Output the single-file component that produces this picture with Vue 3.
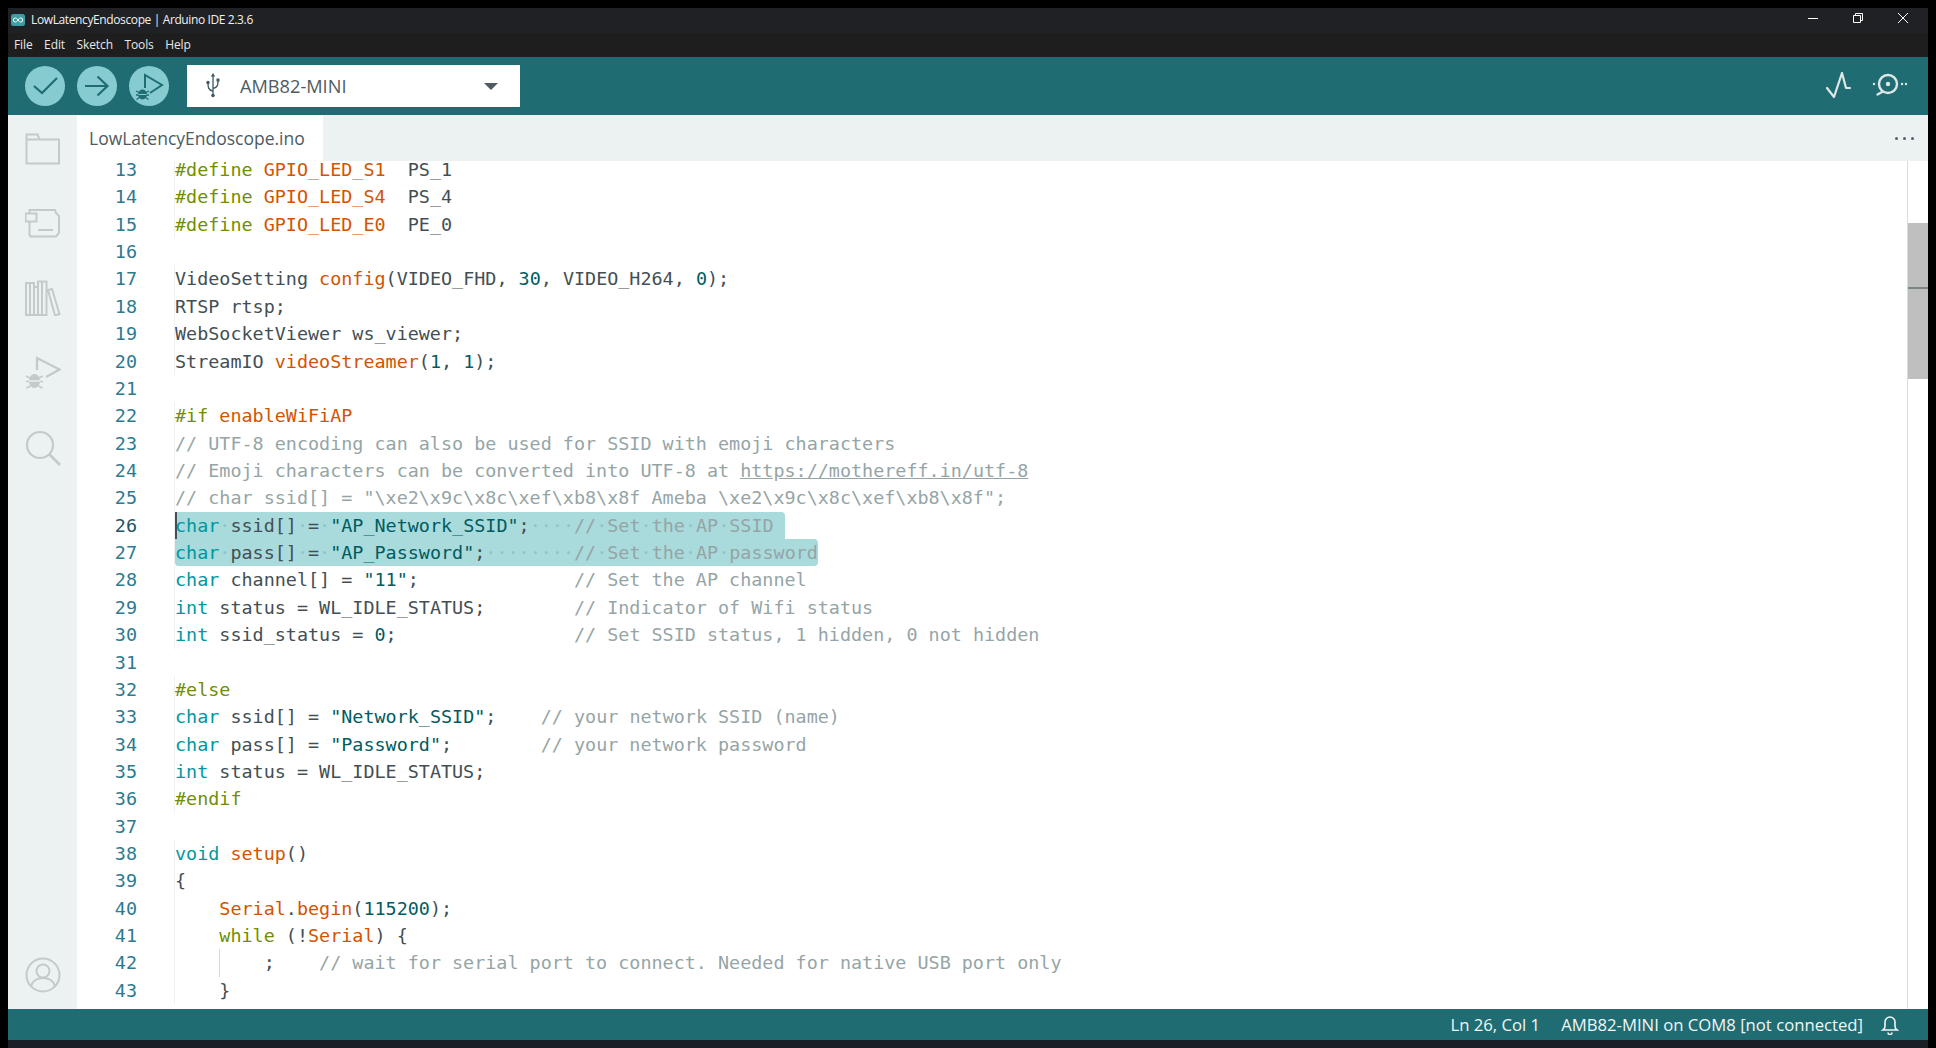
<script setup>
const source = [
  '{p:#define} {f:GPIO_LED_S1}  PS_1',
  '{p:#define} {f:GPIO_LED_S4}  PS_4',
  '{p:#define} {f:GPIO_LED_E0}  PE_0',
  '',
  'VideoSetting {f:config}(VIDEO_FHD, {n:30}, VIDEO_H264, {n:0});',
  'RTSP rtsp;',
  'WebSocketViewer ws_viewer;',
  'StreamIO {f:videoStreamer}({n:1}, {n:1});',
  '',
  '{p:#if} {f:enableWiFiAP}',
  '{c:// UTF-8 encoding can also be used for SSID with emoji characters}',
  '{c:// Emoji characters can be converted into UTF-8 at }{u:https://mothereff.in/utf-8}',
  '{c:// char ssid[] = "\\xe2\\x9c\\x8c\\xef\\xb8\\x8f Ameba \\xe2\\x9c\\x8c\\xef\\xb8\\x8f";}',
  '{k:char}{d:·}ssid[]{d:·}={d:·}{s:"AP_Network_SSID"};{d:····}{c://}{d:·}{c:Set}{d:·}{c:the}{d:·}{c:AP}{d:·}{c:SSID}',
  '{k:char}{d:·}pass[]{d:·}={d:·}{s:"AP_Password"};{d:········}{c://}{d:·}{c:Set}{d:·}{c:the}{d:·}{c:AP}{d:·}{c:password}',
  '{k:char} channel[] = {s:"11"};              {c:// Set the AP channel}',
  '{k:int} status = WL_IDLE_STATUS;        {c:// Indicator of Wifi status}',
  '{k:int} ssid_status = {n:0};                {c:// Set SSID status, 1 hidden, 0 not hidden}',
  '',
  '{p:#else}',
  '{k:char} ssid[] = {s:"Network_SSID"};    {c:// your network SSID (name)}',
  '{k:char} pass[] = {s:"Password"};        {c:// your network password}',
  '{k:int} status = WL_IDLE_STATUS;',
  '{p:#endif}',
  '',
  '{k:void} {f:setup}()',
  '{',
  '    {f:Serial}.{f:begin}({n:115200});',
  '    {p:while} (!{f:Serial}) {',
  '        ;    {c:// wait for serial port to connect. Needed for native USB port only}',
  '    }',
]

function parse(text) {
  const parts = []
  const re = /\{([a-z]):([^}]*)\}/g
  let last = 0
  let m
  while ((m = re.exec(text))) {
    if (m.index > last) parts.push({ cls: '', text: text.slice(last, m.index) })
    parts.push({ cls: 't-' + m[1], text: m[2] })
    last = m.index + m[0].length
  }
  if (last < text.length) parts.push({ cls: '', text: text.slice(last) })
  return parts
}

const lines = source.map((text, i) => ({
  no: 13 + i,
  parts: parse(text),
  selected: i === 13 || i === 14,
  guide: i === 29,
}))
const menus = ['File', 'Edit', 'Sketch', 'Tools', 'Help']
</script>

<template>
  <div class="window">
    <header class="titlebar">
      <svg class="logo" viewBox="0 0 14 12" width="14" height="12">
        <rect width="14" height="12" rx="2.5" fill="#3f9ea3" />
        <path d="M7 6C6 4.4 5.2 4 4.3 4a2 2 0 0 0 0 4C5.2 8 6 7.6 7 6c1-1.6 1.8-2 2.7-2a2 2 0 0 1 0 4C8.800 8 8 7.600 7 6z" fill="none" stroke="#fff" stroke-width="1" />
      </svg>
      <span class="title">LowLatencyEndoscope | Arduino IDE 2.3.6</span>
      <div class="winctl">
        <svg width="12" height="12" viewBox="0 0 12 12"><path d="M1 6.500h10" stroke="#fff" fill="none" /></svg>
        <svg width="12" height="12" viewBox="0 0 12 12"><path d="M1.500 3.500h7v7h-7zM3.500 3.500v-2h7v7h-2" stroke="#fff" fill="none" /></svg>
        <svg width="12" height="12" viewBox="0 0 12 12"><path d="M1 1l10 10M11 1L1 11" stroke="#fff" fill="none" /></svg>
      </div>
    </header>
    <nav class="menubar">
      <span v-for="m in menus" :key="m">{{ m }}</span>
    </nav>
    <section class="toolbar">
      <button class="round">
        <svg width="40" height="40" viewBox="0 0 40 40"><path d="M9 20l8 7 15-15" fill="none" stroke="#1f6d72" stroke-width="2.200" /></svg>
      </button>
      <button class="round second">
        <svg width="40" height="40" viewBox="0 0 40 40"><path d="M8 20h22M20.500 10.500l10 9.500-10 9.500" fill="none" stroke="#1f6d72" stroke-width="2.200" /></svg>
      </button>
      <button class="round third">
        <svg width="40" height="40" viewBox="0 0 40 40">
          <path d="M16 22V9l17 10-12 8" fill="none" stroke="#1f6d72" stroke-width="2" />
          <ellipse cx="13.500" cy="28.500" rx="4.500" ry="5" fill="#1f6d72" />
          <path d="M7 25l3 1.500M7 29h3M7.500 33.500l3-2M20 25l-3 1.500M20 29h-3M19.500 33.500l-3-2" stroke="#1f6d72" stroke-width="1.300" />
          <path d="M9.500 28.500h8" stroke="#86cbd0" stroke-width="1" />
        </svg>
      </button>
      <div class="board">
        <svg width="16" height="26" viewBox="0 0 16 26">
          <path d="M8 2v21M8 18C3 17 3 14 3 10M8 15.500c5-1 5-4 5-8" fill="none" stroke="#3f5866" stroke-width="1.300" />
          <circle cx="3" cy="9.500" r="1.700" fill="#3f5866" /><rect x="11.500" y="5.500" width="3" height="3" fill="#3f5866" /><circle cx="8" cy="22.500" r="1.800" fill="#3f5866" /><path d="M8 0l2.200 3.500H5.800z" fill="#3f5866" />
        </svg>
        <span class="board-name">AMB82-MINI</span>
        <span class="caret"></span>
      </div>
      <div class="tool-right">
        <svg width="28" height="28" viewBox="0 0 28 28"><path d="M3 16l7 9 8-24 4 15h4" fill="none" stroke="#dfe7e7" stroke-width="2.200" stroke-linejoin="round" stroke-linecap="round" /></svg>
        <svg width="38" height="28" viewBox="0 0 38 28">
          <circle cx="16" cy="12" r="9" fill="none" stroke="#dfe7e7" stroke-width="2.400" />
          <circle cx="16" cy="12" r="2.200" fill="#dfe7e7" />
          <path d="M10 20l-4.500 2.500" stroke="#dfe7e7" stroke-width="2.400" stroke-linecap="round" />
          <circle cx="2" cy="12" r="1.200" fill="#dfe7e7" /><circle cx="30" cy="12" r="1.200" fill="#dfe7e7" /><circle cx="34" cy="12" r="1.200" fill="#dfe7e7" />
        </svg>
      </div>
    </section>
    <div class="workspace">
      <aside class="sidebar">
        <svg class="side" viewBox="0 0 36 36"><path d="M1.500 4.500h11l2 5h19.500v24H1.500z M1.500 9.500h13" fill="none" stroke="#c4caca" stroke-width="2" /></svg>
        <svg class="side" viewBox="0 0 36 36"><path d="M4.500 8.500V5H30l1 3 3 3v17l-3 3.500H5.500l-1-2V17M0.500 8.500h11v8H0.500zM13 25h15" fill="none" stroke="#c4caca" stroke-width="2" /></svg>
        <svg class="side" viewBox="0 0 36 36"><path d="M1 3h8v32H1zM5 3v32M9 7h4v28H9zM13 1.500h8.500V35H13zM17 1.500V35M23 10l4-1 7.500 25-4.500 1.500z" fill="none" stroke="#c4caca" stroke-width="2" /></svg>
        <svg class="side" viewBox="0 0 36 36"><path d="M12 15V3l22.500 11.500L21 22" fill="none" stroke="#c4caca" stroke-width="2.200" /><ellipse cx="9.500" cy="26" rx="5.500" ry="7" fill="#c4caca" /><path d="M1 21l4 2M1 26.500h4M1.500 33l4-2M18 21l-4 2M18 26.500h-4M17.500 33l-4-2" stroke="#c4caca" stroke-width="1.600" /><path d="M4 26h11" stroke="#ecf1f1" stroke-width="1.400" /></svg>
        <svg class="side" viewBox="0 0 36 36"><circle cx="15" cy="15" r="13" fill="none" stroke="#c4caca" stroke-width="2.200" /><path d="M24 24l11 11" stroke="#c4caca" stroke-width="2.600" /></svg>
        <svg class="side account" viewBox="0 0 36 36"><circle cx="18" cy="18" r="16.500" fill="none" stroke="#c4caca" stroke-width="2" /><circle cx="18" cy="14" r="6.500" fill="none" stroke="#c4caca" stroke-width="2" /><path d="M6 29c2-6 7-8 12-8s10 2 12 8" fill="none" stroke="#c4caca" stroke-width="2" /></svg>
      </aside>
      <main class="main">
        <div class="tabs">
          <div class="tab">LowLatencyEndoscope.ino</div>
          <div class="more"><i></i><i></i><i></i></div>
        </div>
        <div class="editor">
          <div class="code">
            <div v-for="line in lines" :key="line.no" class="line">
              <span class="no" :class="{ current: line.no === 26 }">{{ line.no }}</span>
              <span class="text" :class="{ sel: line.selected, first: line.no === 26, second: line.no === 27, guide: line.guide }"><span v-for="(p, i) in line.parts" :key="i" :class="p.cls">{{ p.text }}</span></span>
              <span v-if="line.no === 26" class="cursor"></span>
            </div>
          </div>
          <div class="scroll"><div class="thumb"><span class="mark"></span></div></div>
        </div>
      </main>
    </div>
    <footer class="status">
      <span>Ln 26, Col 1</span>
      <span class="conn">AMB82-MINI on COM8 [not connected]</span>
      <svg width="18" height="20" viewBox="0 0 18 20"><path d="M2 15c1.500-1 2-2 2-4V7a5 5 0 0 1 10 0v4c0 2 .5 3 2 4zM7 17.500a2 2 0 0 0 4 0" fill="none" stroke="#f2f6f6" stroke-width="1.600" /></svg>
    </footer>
    <div class="taskbar"></div>
  </div>
</template>

<style scoped>
.window {
  width: 1920px;
  height: 1040px;
  margin: 8px 0 0 8px;
  display: flex;
  flex-direction: column;
  overflow: hidden;
  font-family: "Open Sans", "Noto Sans", sans-serif;
}
.titlebar {
  height: 25px;
  flex: none;
  box-sizing: border-box;
  background: #202124;
  color: #f0f0f0;
  display: flex;
  align-items: center;
  font-size: 12px;
  padding: 0 0 2px 3px;
}
.logo { margin-right: 6px; }
.title { font-size: 12px; letter-spacing: -0.38px; }
.winctl {
  margin-left: auto;
  display: flex;
  gap: 33px;
  padding-right: 19px;
  margin-top: -3px;
}
.menubar {
  height: 24px;
  flex: none;
  box-sizing: border-box;
  background: #1e1e1e;
  color: #e8e8e8;
  font-size: 12px;
  letter-spacing: -0.1px;
  display: flex;
  gap: 11.500px;
  align-items: center;
  padding: 0 0 2px 6px;
}
.toolbar {
  height: 58px;
  flex: none;
  background: #1f6d72;
  display: flex;
  align-items: center;
  padding-left: 17px;
}
.round {
  width: 40px;
  height: 40px;
  padding: 0;
  border: 0;
  border-radius: 50%;
  background: #86cbd0;
  display: flex;
}
.second { margin-left: 12px; }
.third { margin-left: 12px; }
.board {
  margin-left: 18px;
  width: 333px;
  height: 42px;
  box-sizing: border-box;
  background: #fff;
  display: flex;
  align-items: center;
  padding-left: 18px;
  color: #4e5b61;
  font-size: 18.200px;
}
.board-name { margin-left: 19px; }
.caret {
  margin-left: 138px;
  width: 0;
  height: 0;
  border-left: 7px solid transparent;
  border-right: 7px solid transparent;
  border-top: 7px solid #4e5b61;
}
.tool-right {
  margin-left: auto;
  display: flex;
  gap: 20px;
  align-items: center;
  padding-right: 18px;
}
.workspace {
  flex: 1;
  min-height: 0;
  display: flex;
}
.sidebar {
  width: 69px;
  flex: none;
  background: #ecf1f1;
  display: flex;
  flex-direction: column;
  align-items: center;
  gap: 39px;
  padding: 15px 0 16px;
  box-sizing: border-box;
}
.side { width: 36px; height: 36px; flex: none; }
.account { margin-top: auto; }
.main {
  flex: 1;
  min-width: 0;
  display: flex;
  flex-direction: column;
}
.tabs {
  height: 46px;
  flex: none;
  background: #ecf1f1;
  display: flex;
  align-items: stretch;
}
.tab {
  width: 246px;
  box-sizing: border-box;
  background: #fff;
  color: #4e5b61;
  font-size: 17.500px;
  padding-left: 12px;
  display: flex;
  align-items: center;
}
.more {
  margin-left: auto;
  display: flex;
  gap: 5px;
  align-items: center;
  padding-right: 14px;
}
.more i { width: 3px; height: 3px; border-radius: 50%; background: #4f6272; }
.editor {
  flex: 1;
  min-height: 0;
  display: flex;
  background: #fff;
}
.code {
  flex: 1;
  min-width: 0;
  font-family: "DejaVu Sans Mono", "Liberation Mono", monospace;
  font-size: 18.420px;
  color: #434f54;
}
.line {
  height: 27.370px;
  line-height: 28px;
  display: flex;
  position: relative;
  white-space: pre;
}
.line:first-child {
  height: 22.400px;
  line-height: 18.600px;
}
.no {
  width: 60px;
  flex: none;
  text-align: right;
  color: #2c7a90;
}
.no.current { color: #1f5566; }
.text {
  display: block;
  margin-left: 38px;
  box-shadow: -1px 0 0 #eef1f1;
}
.text.sel { background: #a9dadc; }
.text.first { border-radius: 4px 4px 0 0; padding-right: 11px; }
.text.second { border-radius: 0 4px 4px 4px; }
.text.guide { background: linear-gradient(#d5dbdb, #d5dbdb) 44px 0 / 1px 100% no-repeat; }
.cursor {
  position: absolute;
  left: 98px;
  top: 0;
  width: 2px;
  height: 27px;
  background: #434f54;
}
.t-p { color: #728e00; }
.t-f { color: #d35400; }
.t-k { color: #00979d; }
.t-n { color: #005c5f; }
.t-s { color: #005c5f; }
.t-c { color: #95a5a6; }
.t-u { color: #95a5a6; text-decoration: underline; }
.t-d { color: #8fc4c6; }
.scroll {
  width: 21px;
  flex: none;
  border-left: 1px solid #dcdcdc;
  box-sizing: border-box;
  padding-top: 62px;
}
.thumb {
  height: 156px;
  background: #bfbfbf;
  position: relative;
}
.mark {
  position: absolute;
  left: 0;
  right: 0;
  top: 64px;
  height: 2px;
  background: #7a8587;
}
.status {
  height: 31px;
  flex: none;
  background: #1f6d72;
  color: #f2f6f6;
  font-size: 16.700px;
  display: flex;
  align-items: center;
  justify-content: flex-end;
  padding-right: 29px;
}
.conn { margin-left: 21px; margin-right: 18px; }
.taskbar { height: 8px; flex: none; background: #1a1f26; }
</style>

<style>
html, body { margin: 0; background: #000; overflow: hidden; }
</style>
